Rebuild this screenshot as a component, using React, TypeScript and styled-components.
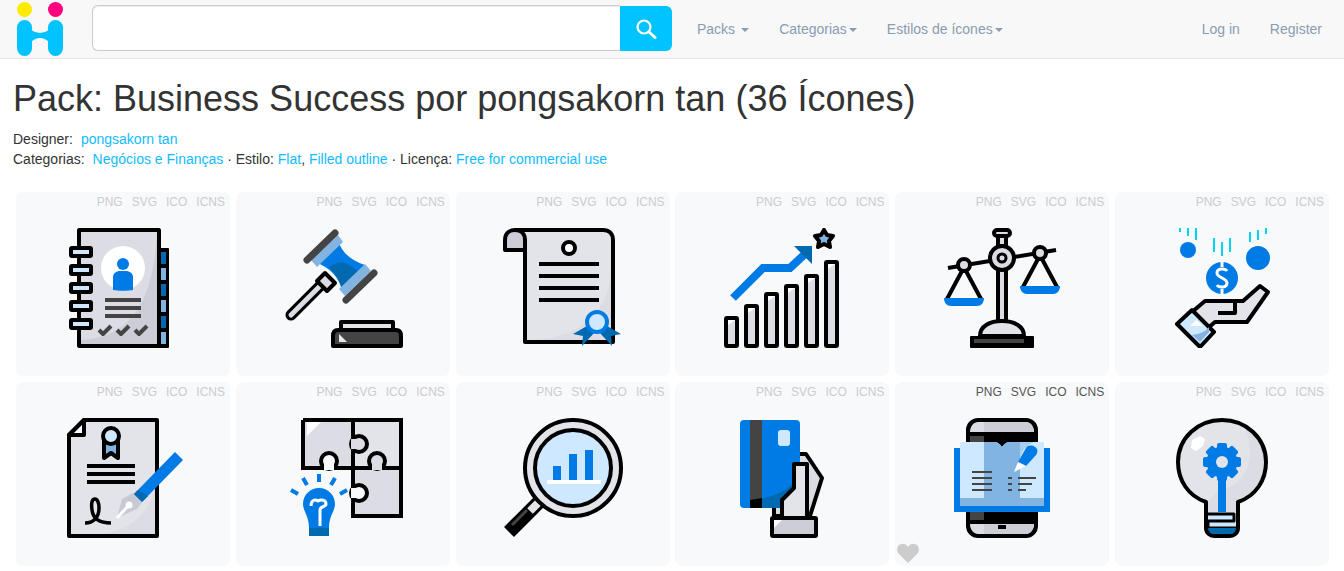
import React from 'react';
import styled, { createGlobalStyle } from 'styled-components';

const BLUE = '#007be5';
const DARK = '#0069b0';
const MID = '#82b4e1';
const PALE = '#cde8ff';
const GRAY = '#dcdce4';
const LIGHT = '#e3e4ea';
const SHADE = '#cdcdd8';
const COAL = '#444444';
const CARD_BG = '#f8f9fb';

const GlobalStyle = createGlobalStyle`
  html, body {
    margin: 0;
    padding: 0;
    background: #fff;
    font-family: "Liberation Sans", Arial, sans-serif;
    font-size: 14px;
    line-height: 20px;
    color: #333;
  }
  * { box-sizing: border-box; }
`;

const Navbar = styled.nav`
  display: flex;
  align-items: flex-start;
  height: 59px;
  background: #f8f8f8;
  border-bottom: 1px solid #e7e7e7;
  padding: 0 22px 0 16px;
`;

const LogoSvg = styled.svg`
  width: 48px;
  height: 58px;
  flex: none;
`;

const SearchForm = styled.form`
  display: flex;
  margin: 5px 0 0 28px;
  width: 580px;
  height: 46px;
`;

const SearchInput = styled.input`
  flex: 1;
  min-width: 0;
  border: 1px solid #ccc;
  border-right: none;
  border-radius: 6px 0 0 6px;
  background: #fff;
  box-shadow: inset 0 1px 1px rgba(0, 0, 0, 0.075);
  outline: none;
`;

const SearchButton = styled.button`
  width: 52px;
  margin-top: 1px;
  border: none;
  padding: 0;
  border-radius: 0 6px 6px 0;
  background: #00c3ff;
  display: flex;
  align-items: center;
  justify-content: center;
`;

const NavLinks = styled.div<{ $right?: boolean }>`
  display: flex;
  margin-left: ${(p) => (p.$right ? 'auto' : '25px')};
  gap: 30px;
  height: 58px;
  align-items: center;
`;

const NavLink = styled.a`
  color: #8a9cb0;
  font-size: 14px;
  display: flex;
  align-items: center;
  text-decoration: none;
`;

const Caret = styled.span<{ $gap: number }>`
  margin-left: ${(p) => p.$gap}px;
  margin-top: 2px;
  width: 0;
  height: 0;
  border-top: 4px solid #8a9cb0;
  border-left: 4px solid transparent;
  border-right: 4px solid transparent;
`;

const Main = styled.main`
  padding: 0 15px 0 13px;
`;

const Title = styled.h1`
  margin: 20px 0 10px;
  font-size: 36px;
  font-weight: 400;
  line-height: 40px;
  color: #333;
`;

const InfoRow = styled.div`
  font-size: 14px;
  line-height: 20px;
  white-space: nowrap;
`;

const Label = styled.span<{ $gap: number }>`
  margin-right: ${(p) => p.$gap}px;
`;

const InfoLink = styled.a`
  color: #12bbff;
  text-decoration: none;
`;

const Grid = styled.div`
  margin: 23px 0 0 3px;
  display: grid;
  grid-template-columns: repeat(6, 1fr);
  column-gap: 5.8px;
  row-gap: 6px;
`;

const Card = styled.div`
  position: relative;
  height: 184px;
  border-radius: 7px;
  background: ${CARD_BG};
  display: flex;
  flex-direction: column;
  align-items: center;
`;

const Formats = styled.div<{ $active?: boolean }>`
  align-self: flex-end;
  display: flex;
  gap: 9px;
  height: 36px;
  padding: 0 5px 0 0;
  font-size: 12px;
  line-height: 20px;
  color: ${(p) => (p.$active ? '#555' : '#ccc')};
`;

const IconSvg = styled.svg`
  width: 120px;
  height: 120px;
  display: block;
`;

const Heart = styled.svg`
  position: absolute;
  left: 2px;
  bottom: 3px;
  width: 22px;
  height: 20px;
`;

const Icon = ({ children }: { children: React.ReactNode }) => (
  <IconSvg viewBox="0 0 120 120" fill="none" strokeLinejoin="round">{children}</IconSvg>
);

const NotebookIcon = () => (
  <Icon>
    <rect x="96" y="20" width="10" height="100" rx="1" fill="#000" />
    {[24, 40, 56, 72, 88, 104].map((y, i) => (
      <rect key={y} x="98" y={y} width="5" height="12" fill={i % 2 ? MID : DARK} />
    ))}
    <rect x="16" y="2" width="80" height="116" rx="1" fill={GRAY} stroke="#000" strokeWidth="4" />
    <path d="M94 4V116H18V112C58 110 90 88 94 4Z" fill={SHADE} />
    <rect x="16" y="2" width="80" height="116" rx="1" stroke="#000" strokeWidth="4" />
    {[18, 36, 54, 72, 90].map((y) => (
      <rect key={y} x="8" y={y + 2} width="20" height="8" rx="1" fill={PALE} stroke="#000" strokeWidth="4" />
    ))}
    <circle cx="60" cy="40" r="22" fill="#fff" />
    <circle cx="60" cy="36" r="6" fill={BLUE} />
    <path d="M50 62V49C50 45 54 43 57 43H63C66 43 70 45 70 49V62C64 63 56 63 50 62Z" fill={BLUE} />
    {[72, 80, 88].map((y) => <rect key={y} x="42" y={y - 2} width="36" height="4" fill={COAL} />)}
    {[42, 60, 78].map((x) => (
      <path key={x} d={`M${x - 6} 102L${x - 2} 106L${x + 6} 98`} stroke={COAL} strokeWidth="4" />
    ))}
  </Icon>
);

const GavelIcon = () => (
  <Icon>
    <path d="M8 87L38 57" stroke="#000" strokeWidth="11" strokeLinecap="round" />
    <path d="M8 87L38 57" stroke={GRAY} strokeWidth="5" strokeLinecap="round" />
    <path d="M34 53L42 45L52 55L44 63Z" fill={GRAY} stroke="#000" strokeWidth="4" />
    <path d="M32 34L55 12Q60 30 82 37L60 63Q54 42 32 34Z" fill={BLUE} />
    <path d="M46 39Q56 32 64 36Q70 40 77 44L59 62Q56 50 46 39Z" fill={DARK} />
    <path d="M28 32L55 7L60 14L34 39Z" fill={MID} />
    <path d="M56 61L82 36L88 43L62 68Z" fill={MID} />
    <path d="M24 32L52 5" stroke={COAL} strokeWidth="7" strokeLinecap="round" />
    <path d="M63 72L91 45" stroke={COAL} strokeWidth="7" strokeLinecap="round" />
    <rect x="58" y="94" width="52" height="8" fill={LIGHT} stroke="#000" strokeWidth="4" />
    <path d="M50 118V108C50 104 52 102 55 102H113C116 102 118 104 118 108V118Z" fill={COAL} stroke="#000" strokeWidth="4" />
    <path d="M56 106L64 114H56Z" fill="#e8e8ee" />
  </Icon>
);

const ScrollIcon = () => (
  <Icon>
    <path d="M22 22V114H110V12C110 6 106 2 100 2H12C18 2 22 8 22 22Z" fill={LIGHT} />
    <path d="M108 40C108 80 80 110 30 112H108Z" fill={GRAY} />
    <path d="M22 22V114H110V12C110 6 106 2 100 2H12" stroke="#000" strokeWidth="4" />
    <path d="M2 22V12C2 6 6 2 12 2C18 2 22 6 22 12V22Z" fill={SHADE} stroke="#000" strokeWidth="4" />
    <circle cx="66" cy="20" r="6" fill="#fff" stroke="#000" strokeWidth="4" />
    {[36, 48, 60, 72].map((y) => <rect key={y} x="36" y={y - 2} width="60" height="4" fill="#000" />)}
    <path d="M84 98L70 106L80 108L79 118L92 104Z" fill={DARK} />
    <path d="M104 98L118 106L108 108L109 118L96 104Z" fill={DARK} />
    <circle cx="94" cy="94" r="10" fill={PALE} stroke={BLUE} strokeWidth="4" />
  </Icon>
);

const ChartIcon = () => {
  const bars: [number, number][] = [[2, 88], [22, 76], [42, 64], [62, 56], [82, 46], [102, 32]];
  return (
    <Icon>
      {bars.map(([x, y]) => (
        <g key={x}>
          <rect x={x + 2} y={y + 2} width="11" height={118 - y - 2} rx="1" fill={GRAY} stroke="#000" strokeWidth="4" />
          <path d={`M${x + 4} ${y + 9}L${x + 11} ${y + 4}H${x + 4}Z`} fill="#fff" />
        </g>
      ))}
      <path d="M11 70L41 40H68L84 25" stroke={BLUE} strokeWidth="8" strokeLinejoin="miter" />
      <path d="M72 18H90V36Z" fill={DARK} />
      <path d="M102 2L105 7L111 8L107 13L108 19L102 16L96 19L97 13L93 8L99 7Z" fill={MID} stroke="#000" strokeWidth="4" />
    </Icon>
  );
};

const ScaleIcon = () => (
  <Icon>
    <path d="M6 40L114 22" stroke="#000" strokeWidth="4" />
    <rect x="52" y="2" width="16" height="6" rx="3" fill={GRAY} stroke="#000" strokeWidth="4" />
    <path d="M56 8H64V18H56Z" fill={GRAY} stroke="#000" strokeWidth="4" />
    <rect x="56" y="36" width="8" height="58" fill={GRAY} stroke="#000" strokeWidth="4" />
    <circle cx="60" cy="30" r="12" fill={GRAY} stroke="#000" strokeWidth="4" />
    <circle cx="60" cy="30" r="4" fill={GRAY} stroke="#000" strokeWidth="3" />
    <circle cx="22" cy="37" r="6" fill={GRAY} stroke="#000" strokeWidth="4" />
    <circle cx="98" cy="25" r="6" fill={GRAY} stroke="#000" strokeWidth="4" />
    <path d="M20 43L5 71M24 43L39 71" stroke="#000" strokeWidth="4" />
    <path d="M96 31L81 59M100 31L115 59" stroke="#000" strokeWidth="4" />
    <path d="M2 70H42C42 75 39 78 35 78H9C5 78 2 75 2 70Z" fill={BLUE} />
    <path d="M78 58H118C118 63 115 66 111 66H85C81 66 78 63 78 58Z" fill={BLUE} />
    <path d="M38 108C38 98 48 93 60 93C72 93 82 98 82 108Z" fill={LIGHT} stroke="#000" strokeWidth="4" />
    <rect x="28" y="108" width="64" height="12" rx="1" fill="#000" />
    <rect x="32" y="111" width="50" height="4" fill={COAL} />
  </Icon>
);

const CoinHandIcon = () => (
  <Icon>
    <path d="M18 0V4M26 0V8M34 0V12M52 10V24M60 14V28M68 10V24M88 4V14M96 2V12M104 0V6" stroke="#00d4f0" strokeWidth="2" />
    <circle cx="26" cy="22" r="8" fill={BLUE} />
    <circle cx="96" cy="30" r="12" fill={BLUE} />
    <circle cx="60" cy="50" r="16" fill={BLUE} />
    <path d="M65 43C63 40 55 40 55 45C55 50 65 50 65 55C65 60 57 60 55 57M60 34V39M60 61V66" stroke="#fff" strokeWidth="3" />
    <path d="M30 84L43 73H81L98 58L106 64L85 94H53L46 100Z" fill={LIGHT} stroke="#000" strokeWidth="4" />
    <path d="M56 85H73V74" stroke="#000" strokeWidth="4" />
    <path d="M30 82L52 104L38 119L15 96Z" fill={PALE} stroke="#000" strokeWidth="4" />
    <path d="M47 104L38 114L30 107C38 106 43 104 47 99Z" fill={MID} />
    <path d="M28 98L34 92L41 98Z" fill="#fff" />
  </Icon>
);

const ContractIcon = () => (
  <Icon>
    <path d="M21 2H94V118H6V17Z" fill={LIGHT} />
    <path d="M92 70V116H40C66 112 86 96 92 70Z" fill={GRAY} />
    <path d="M21 2H94V118H6V17Z" stroke="#000" strokeWidth="4" />
    <path d="M6 17H21V2Z" fill="#fff" stroke="#000" strokeWidth="4" />
    <path d="M41 22V40L48 35L55 40V22Z" fill={MID} stroke="#000" strokeWidth="4" />
    <circle cx="48" cy="18" r="8" fill={PALE} stroke="#000" strokeWidth="4" />
    {[48, 56, 64].map((y) => <rect key={y} x="24" y={y - 2} width="48" height="4" fill="#000" />)}
    <path d="M22 105C30 105 36 100 36 90C36 84 34 81 32 81C29 81 28 85 29 92C30 100 36 105 48 105" stroke="#000" strokeWidth="3.5" />
    <path d="M54 100L59 81L70 75L79 85L74 91Z" fill="#c8c9d3" />
    <path d="M54 100L66 87" stroke="#fff" strokeWidth="3" />
    <circle cx="66" cy="87" r="3.5" fill="#fff" />
    <path d="M71 76L112 34L120 42L79 84Z" fill={BLUE} />
    <path d="M71 76L79 84L85 78L75 72Z" fill={DARK} />
  </Icon>
);

const PuzzleIcon = () => (
  <Icon>
    <path d="M22 2H70V50H22Z" fill={GRAY} />
    <path d="M70 2H118V50H70Z" fill={LIGHT} />
    <path d="M70 50H118V98H70Z" fill={GRAY} />
    <path d="M24 4H38L24 18Z" fill="#fff" />
    <path d="M20 2H118V98H70V2M70 50H118M20 2V50H70" stroke="#000" strokeWidth="4" strokeLinejoin="miter" />
    <circle cx="46" cy="43" r="8" fill={CARD_BG} stroke="#000" strokeWidth="4" />
    <circle cx="94" cy="43" r="8" fill={GRAY} stroke="#000" strokeWidth="4" />
    <circle cx="76" cy="26" r="8" fill={GRAY} stroke="#000" strokeWidth="4" />
    <circle cx="76" cy="75" r="8" fill={CARD_BG} stroke="#000" strokeWidth="4" />
    <rect x="41" y="46" width="10" height="6" fill={CARD_BG} />
    <rect x="89" y="46" width="10" height="6" fill={GRAY} />
    <rect x="68" y="21" width="6" height="10" fill={GRAY} />
    <rect x="68" y="70" width="6" height="10" fill={CARD_BG} />
    <path d="M36 56V64M20 60L24 67M52 60L48 67M8 72L15 76M64 72L57 76" stroke={BLUE} strokeWidth="4" />
    <path d="M20 86C20 77 27 70 36 70C45 70 52 77 52 86C52 93 46 98 46 110H26C26 98 20 93 20 86Z" fill={BLUE} />
    <rect x="26" y="110" width="20" height="8" fill={DARK} />
    <path d="M28 88C28 82 32 81 35 83C38 81 43 82 43 86C43 89 37 88 37 92V108" stroke="#fff" strokeWidth="3" />
  </Icon>
);

const MagnifierIcon = () => (
  <Icon>
    <path d="M6 114L38 82" stroke="#000" strokeWidth="14" />
    <path d="M27 93L38 82" stroke={LIGHT} strokeWidth="8" />
    <path d="M9 107L24 92" stroke={COAL} strokeWidth="3" />
    <circle cx="70" cy="50" r="48" fill={LIGHT} stroke="#000" strokeWidth="4" />
    <circle cx="70" cy="50" r="38" fill={PALE} stroke="#000" strokeWidth="4" />
    <rect x="50" y="48" width="8" height="16" fill={BLUE} />
    <rect x="66" y="36" width="8" height="28" fill={BLUE} />
    <rect x="82" y="32" width="8" height="32" fill={BLUE} />
    <rect x="44" y="62" width="54" height="4" fill="#fff" />
  </Icon>
);

const CardHandIcon = () => (
  <Icon>
    <path d="M73 36H84L100 60L88 98H52V84H60V36Z" fill={GRAY} stroke="#000" strokeWidth="4" />
    <rect x="18" y="2" width="60" height="88" rx="4" fill={BLUE} />
    <rect x="28" y="2" width="12" height="88" fill={COAL} />
    <path d="M78 52V86C78 88 76 90 74 90H28V82C56 80 72 70 78 52Z" fill={DARK} />
    <path d="M28 82L40 80V90H28Z" fill="#000" />
    <rect x="56" y="12" width="12" height="16" rx="3" fill={PALE} />
    <path d="M72 46H84V98H60V82L72 70Z" fill={LIGHT} />
    <path d="M60 98V82L72 70V46H85V98" stroke="#000" strokeWidth="4" />
    <rect x="50" y="100" width="44" height="18" rx="1" fill={SHADE} stroke="#000" strokeWidth="4" />
    <path d="M52 110L60 102H52Z" fill="#fff" />
  </Icon>
);

const PhoneBookIcon = () => (
  <Icon>
    <rect x="26" y="2" width="68" height="116" rx="10" fill="#000" stroke="#000" strokeWidth="4" />
    <path d="M28 14C28 8 32 4 36 4H84C88 4 92 8 92 14H28Z" fill={GRAY} />
    <path d="M42 4H84C88 4 92 8 92 14H42Z" fill={SHADE} />
    <path d="M28 106H92C92 112 88 116 84 116H36C32 116 28 112 28 106Z" fill={GRAY} />
    <path d="M42 106H92C92 112 88 116 84 116H42Z" fill={SHADE} />
    <rect x="28" y="18" width="14" height="84" fill={COAL} />
    <rect x="56" y="107" width="8" height="4" fill="#000" />
    <rect x="12" y="30" width="96" height="64" fill={BLUE} />
    <path d="M18 24H52C56 24 58 26 60 29C62 26 64 24 68 24H102V88H18Z" fill={PALE} />
    <path d="M42 24H52C56 24 58 26 60 29C62 26 64 24 68 24H78V80H42Z" fill={MID} />
    <rect x="18" y="80" width="84" height="8" fill={MID} />
    <path d="M78 24H92C80 30 78 36 78 44Z" fill={MID} opacity="0.5" />
    <path d="M30 54H50M30 60H50M30 66H50M30 72H50M66 60H70M76 60H94M66 66H70M76 66H90M66 72H70M76 72H84" stroke={COAL} strokeWidth="2" />
    <path d="M76 44L84 30C86 27 90 27 93 29C96 31 96 34 94 37L84 48Z" fill={BLUE} />
    <path d="M72 54L76 44L84 48Z" fill="#fff" />
  </Icon>
);

const BulbIcon = () => {
  const teeth = [0, 45, 90, 135, 180, 225, 270, 315];
  const outline = 'M44 110V84C26 78 16 62 16 44C16 20 36 2 60 2C84 2 104 20 104 44C104 62 94 78 76 84V110C76 115 72 118 68 118H52C48 118 44 115 44 110Z';
  return (
    <Icon>
      <path d={outline} fill={LIGHT} />
      <path d="M81 8C94 30 92 64 55 74L46 84V94H74V84C92 78 102 62 102 44C102 30 94 16 81 8Z" fill={GRAY} />
      <path d="M30 22L38 18L43 21L41 28L34 33L29 30Z" fill="#fff" />
      <rect x="56" y="44" width="8" height="50" fill={BLUE} />
      {teeth.map((a) => <rect key={a} x="55" y="25" width="10" height="10" rx="2" fill={BLUE} transform={`rotate(${a} 60 44)`} />)}
      <circle cx="60" cy="44" r="15.500" fill={BLUE} />
      <circle cx="60" cy="44" r="6" fill={LIGHT} />
      <path d="M46 94H74V110H46Z" fill={PALE} />
      <path d="M44 96H72V103H46M46 103V110H76" stroke="#000" strokeWidth="3" />
      <path d="M46 110H74C74 115 71 116 68 116H52C49 116 46 115 46 110Z" fill={DARK} />
      <path d={outline} stroke="#000" strokeWidth="4" />
    </Icon>
  );
};

const ICONS = [
  NotebookIcon, GavelIcon, ScrollIcon, ChartIcon, ScaleIcon, CoinHandIcon,
  ContractIcon, PuzzleIcon, MagnifierIcon, CardHandIcon, PhoneBookIcon, BulbIcon,
];
const HOVERED = 10;

export default function App() {
  return (
    <>
      <GlobalStyle />
      <Navbar>
        <LogoSvg viewBox="0 0 48 58">
          <circle cx="8.500" cy="9.500" r="7.500" fill="#ffea00" />
          <circle cx="39.500" cy="9.500" r="7.500" fill="#ff0080" />
          <rect x="1" y="20" width="15" height="36" rx="7.500" fill="#00c3ff" />
          <rect x="32" y="20" width="15" height="36" rx="7.500" fill="#00c3ff" />
          <path d="M15 30Q24 36 33 30V42Q24 34 15 42Z" fill="#00c3ff" />
        </LogoSvg>
        <SearchForm>
          <SearchInput aria-label="Buscar" />
          <SearchButton type="button" aria-label="Buscar">
            <svg width="22" height="22" viewBox="0 0 22 22" fill="none">
              <circle cx="9" cy="9" r="6.500" stroke="#fff" strokeWidth="2.200" />
              <path d="M14 14L20 19.500" stroke="#fff" strokeWidth="3" strokeLinecap="round" />
            </svg>
          </SearchButton>
        </SearchForm>
        <NavLinks>
          <NavLink>Packs<Caret $gap={6} /></NavLink>
          <NavLink>Categorias<Caret $gap={2} /></NavLink>
          <NavLink>Estilos de ícones<Caret $gap={2} /></NavLink>
        </NavLinks>
        <NavLinks $right>
          <NavLink>Log in</NavLink>
          <NavLink>Register</NavLink>
        </NavLinks>
      </Navbar>
      <Main>
        <Title>Pack: Business Success por pongsakorn tan (36 Ícones)</Title>
        <InfoRow>
          <Label $gap={8}>Designer:</Label>
          <InfoLink>pongsakorn tan</InfoLink>
        </InfoRow>
        <InfoRow>
          <Label $gap={8}>Categorias:</Label>
          <InfoLink>Negócios e Finanças</InfoLink> · Estilo: <InfoLink>Flat</InfoLink>, <InfoLink>Filled outline</InfoLink> · Licença: <InfoLink>Free for commercial use</InfoLink>
        </InfoRow>
        <Grid>
          {ICONS.map((Drawing, i) => (
            <Card key={i}>
              <Formats $active={i === HOVERED}>
                <span>PNG</span>
                <span>SVG</span>
                <span>ICO</span>
                <span>ICNS</span>
              </Formats>
              <Drawing />
              {i === HOVERED && (
                <Heart viewBox="0 0 22 20">
                  <path d="M11 20L2 11C-1 8 0 3 3 1.500C6 0 9 1 11 4C13 1 16 0 19 1.500C22 3 23 8 20 11Z" fill="#ccc" />
                </Heart>
              )}
            </Card>
          ))}
        </Grid>
      </Main>
    </>
  );
}
